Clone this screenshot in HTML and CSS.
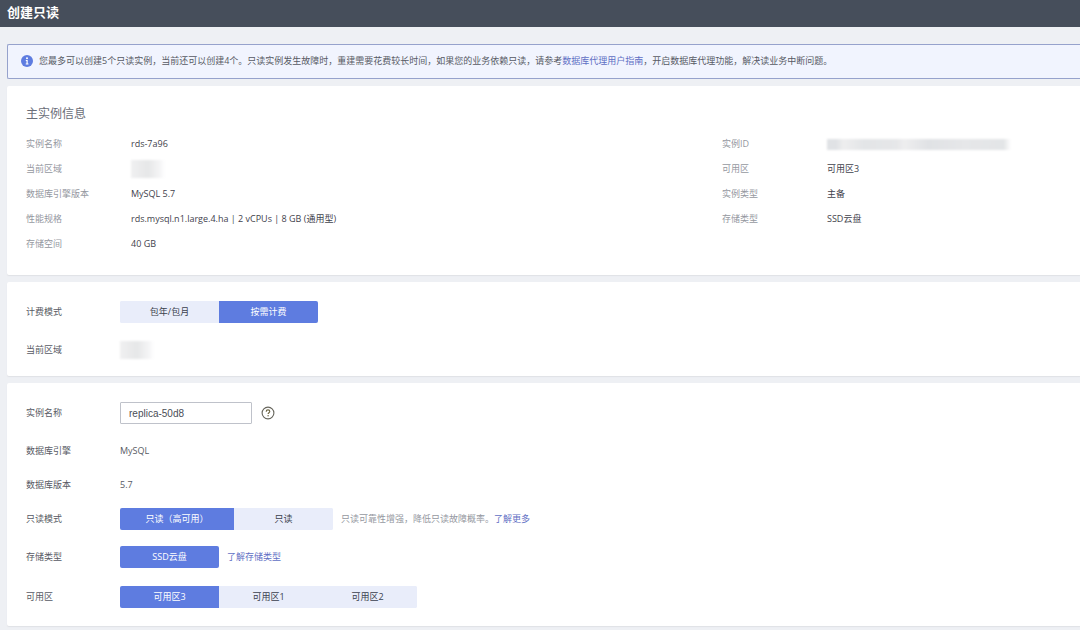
FILE: index.html
```html
<!DOCTYPE html>
<html lang="zh-CN">
<head>
<meta charset="utf-8">
<meta name="viewport" content="width=device-width, initial-scale=1">
<title>创建只读</title>
<link rel="stylesheet" href="styles.css">
</head>
<body>
<header class="topbar"><h1 class="topbar-title">创建只读</h1></header>
<main class="page">
  <div class="notice">
    <svg class="notice-icon" viewBox="0 0 12 12" aria-hidden="true"><circle cx="6" cy="6" r="6" fill="#5e7ce0"/><circle cx="6" cy="3.2" r="1" fill="#fff"/><path d="M4.8 5.1h1.9v3.5h.8v.9H4.7v-.9h.8V6h-.7z" fill="#fff"/></svg>
    <p class="notice-text">您最多可以创建5个只读实例，当前还可以创建4个。只读实例发生故障时，重建需要花费较长时间，如果您的业务依赖只读，请参考<a class="link" href="#proxy">数据库代理用户指南</a>，开启数据库代理功能，解决读业务中断问题。</p>
  </div>

  <section class="card info">
    <h2 class="card-title">主实例信息</h2>
    <div class="info-columns">
      <dl class="facts">
        <dt>实例名称</dt><dd>rds-7a96</dd>
        <dt>当前区域</dt><dd><span class="mask mask-region"></span></dd>
        <dt>数据库引擎版本</dt><dd>MySQL 5.7</dd>
        <dt>性能规格</dt><dd>rds.mysql.n1.large.4.ha | 2 vCPUs | 8 GB (通用型)</dd>
        <dt>存储空间</dt><dd>40 GB</dd>
      </dl>
      <dl class="facts">
        <dt>实例ID</dt><dd><span class="mask mask-id"></span></dd>
        <dt>可用区</dt><dd>可用区3</dd>
        <dt>实例类型</dt><dd>主备</dd>
        <dt>存储类型</dt><dd>SSD云盘</dd>
      </dl>
    </div>
  </section>

  <section class="card form">
    <div class="row">
      <span class="label" id="l-bill">计费模式</span>
      <div class="segments" role="group" aria-labelledby="l-bill">
        <button class="segment" type="button">包年/包月</button>
        <button class="segment selected" type="button" aria-pressed="true">按需计费</button>
      </div>
    </div>
    <div class="row">
      <span class="label">当前区域</span>
      <span class="mask mask-region"></span>
    </div>
  </section>

  <section class="card form form-last">
    <div class="row">
      <label class="label" for="name">实例名称</label>
      <input class="text-input" id="name" type="text" value="replica-50d8">
      <svg class="help" viewBox="0 0 14 14" role="img" aria-label="帮助"><circle cx="7" cy="7" r="5.9" fill="none" stroke="#66655c" stroke-width="1.1"/><path d="M5.2 5.7c0-1.1.8-1.8 1.8-1.8s1.8.7 1.8 1.6c0 1.2-1.7 1.2-1.7 2.5" fill="none" stroke="#6b6340" stroke-width="1.1"/><circle cx="7.1" cy="9.7" r=".7" fill="#6b6340"/></svg>
    </div>
    <div class="row">
      <span class="label">数据库引擎</span><span>MySQL</span>
    </div>
    <div class="row tight">
      <span class="label">数据库版本</span><span>5.7</span>
    </div>
    <div class="row tight">
      <span class="label" id="l-mode">只读模式</span>
      <div class="segments" role="group" aria-labelledby="l-mode">
        <button class="segment wide selected" type="button" aria-pressed="true">只读（高可用）</button>
        <button class="segment" type="button">只读</button>
      </div>
      <span class="hint">只读可靠性增强，降低只读故障概率。<a class="link" href="#mode">了解更多</a></span>
    </div>
    <div class="row">
      <span class="label" id="l-store">存储类型</span>
      <div class="segments" role="group" aria-labelledby="l-store">
        <button class="segment selected" type="button" aria-pressed="true">SSD云盘</button>
      </div>
      <a class="link hint" href="#storage">了解存储类型</a>
    </div>
    <div class="row loose">
      <span class="label" id="l-zone">可用区</span>
      <div class="segments" role="group" aria-labelledby="l-zone">
        <button class="segment selected" type="button" aria-pressed="true">可用区3</button>
        <button class="segment" type="button">可用区1</button>
        <button class="segment" type="button">可用区2</button>
      </div>
    </div>
  </section>
</main>
</body>
</html>
```
FILE: styles.css
```css
* { box-sizing: border-box; }
body {
  margin: 0;
  background: #eef0f4;
  color: #575a64;
  font: 9px/22px "Open Sans", "Noto Sans CJK SC", sans-serif;
}
h1, h2, p, dl, dd { margin: 0; }
.link { color: #5f6fc4; text-decoration: none; }

.topbar {
  display: flex;
  align-items: center;
  height: 27px;
  padding: 0 7px 3px;
  background: #464e5b;
}
.topbar-title { color: #fff; font-size: 13px; line-height: 24px; font-weight: 700; }

.page {
  display: flex;
  flex-direction: column;
  gap: 7px;
  padding: 17px 0 4px 7px;
}
.notice {
  display: flex;
  align-items: center;
  gap: 6px;
  padding: 5px 13px 6px;
  border: 1px solid #96a2cc;
  border-right: 0;
  border-radius: 2px 0 0 2px;
  background: #f1f4fe;
}
.notice-icon { flex: none; width: 12px; height: 12px; }

.card {
  background: #fff;
  border-radius: 2px 0 0 2px;
  box-shadow: 0 1px 1px #dfe1e6;
}
.info { padding: 18px 10px 18px 19px; }
.card-title { margin-bottom: 8px; color: #6a6e78; font-size: 12px; line-height: 20px; font-weight: 400; }
.info-columns { display: grid; grid-template-columns: 2fr 1fr; align-items: start; }
.facts { display: grid; grid-template-columns: 105px 1fr; grid-auto-rows: 25px; line-height: 24px; }
.facts dt { color: #95989f; }
.facts dd { color: #3f424c; }

.mask { display: block; filter: blur(1px); }
.mask-region { width: 34px; height: 18px; background: linear-gradient(90deg, #f0f0f1, #e6e7e8 50%, #f5f5f6 85%, #fff); }
.facts .mask { margin: 3px 0; }
.facts .mask-id { margin: 7px 0; }
.mask-id { width: 184px; height: 11px; background: linear-gradient(90deg, #e0e2e5 5%, #eeeeef 9%, #e3e5e7 20%, #e6e7e9 38%, #eeeeef 42%, #e0e2e5 55%, #e6e7e9 75%, #e3e5e7 96%, #fff); }

.form { padding: 19px 10px 15px 19px; }
.form-last { padding-bottom: 18px; }
.row { display: flex; align-items: center; min-height: 22px; }
.row + .row { margin-top: 16px; }
.row + .tight { margin-top: 12px; }
.row + .loose { margin-top: 18px; }
.label { flex: none; width: 94px; }
.hint { margin-left: 8px; }
span.hint { color: #95989f; }

.segments { display: flex; border-radius: 2px; overflow: hidden; background: #e9edfa; }
.segment {
  width: 99px;
  height: 22px;
  padding: 0;
  border: 0;
  background: #e9edfa;
  color: #3a3f4d;
  font: inherit;
  text-align: center;
}
.segment.wide { width: 114px; }
.segment.selected { background: #5e7ce0; color: #fff; }

.text-input {
  width: 132px;
  height: 22px;
  padding: 0 8px;
  border: 1px solid #bfc2ca;
  border-radius: 1px;
  background: #fff;
  color: #4a4d56;
  font: 10px "Liberation Sans", sans-serif;
}
.help { width: 14px; height: 14px; margin-left: 9px; }
```
